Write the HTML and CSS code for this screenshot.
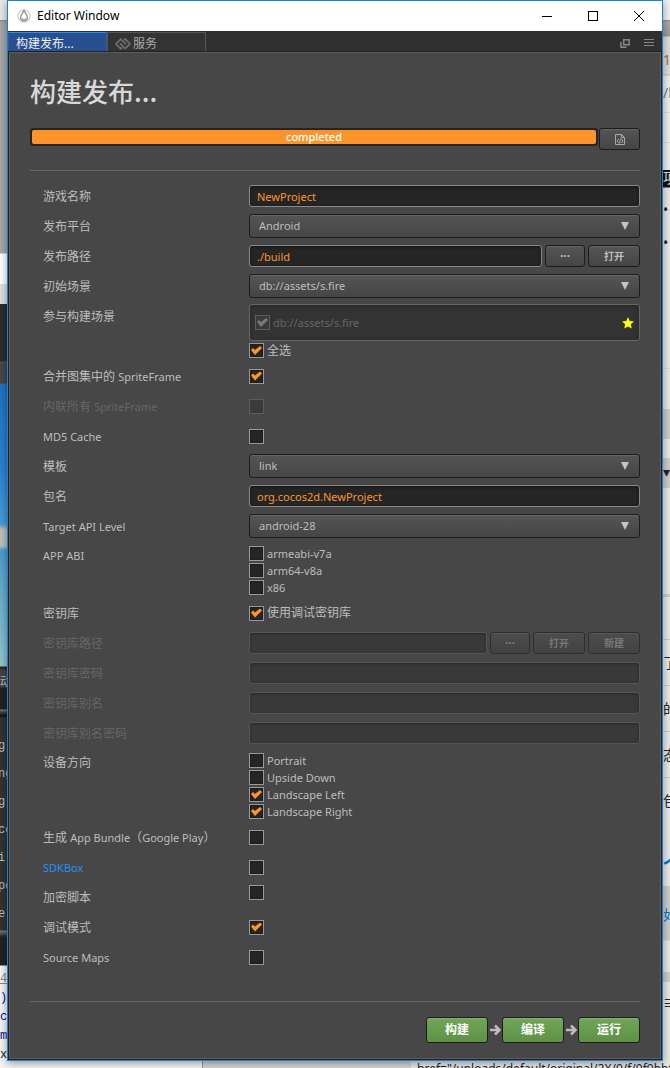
FILE: index.html
```html
<!DOCTYPE html>
<html lang="zh-CN">
<head>
    <meta charset="UTF-8">
    <meta name="viewport" content="width=device-width, initial-scale=1.0">
    <title>Editor Window</title>
    <link rel="stylesheet" href="styles.css">
</head>
<body>
<div class="desktop">
    <!-- editor behind the window -->
    <div class="behind behind-left" aria-hidden="true">
        <div class="side-tab">动</div>
        <div class="log">
            <div>g</div>
            <div>ng</div>
            <div>g</div>
            <div>co</div>
            <div>il</div>
            <div>pe</div>
            <div>e</div>
        </div>
        <div class="source">
            <div class="lineno">40</div>
            <div class="tag">)</div>
            <div class="tag">ce</div>
            <div class="tag">me</div>
            <div>xe</div>
        </div>
    </div>

    <main class="window">
        <header class="titlebar">
            <svg class="app-icon" width="14" height="14" viewBox="0 0 14 14">
                <circle cx="7" cy="7" r="6" fill="none" stroke="#d4d4d4" stroke-width="1.4"/>
                <path d="M7 1.6C6 4 3.7 5.6 3.7 8.4a3.3 3.3 0 0 0 6.6 0C10.3 5.6 8 4 7 1.6z" fill="#fff" stroke="#8b9498" stroke-width="1.4"/>
                <path d="M5.2 9.5q1.8 2 3.6 0" fill="none" stroke="#8b9498"/>
            </svg>
            <span class="caption">Editor Window</span>
            <button class="win-btn" aria-label="Minimize"><svg width="10" height="10"><path d="M0 5.5h10" stroke="#000"/></svg></button>
            <button class="win-btn" aria-label="Maximize"><svg width="10" height="10"><rect x=".5" y=".5" width="9" height="9" fill="none" stroke="#000"/></svg></button>
            <button class="win-btn" aria-label="Close"><svg width="10" height="10"><path d="M0 0l10 10M10 0L0 10" stroke="#000"/></svg></button>
        </header>

        <nav class="tabs">
            <button class="tab active">构建发布...</button>
            <button class="tab">
                <svg width="16" height="12" viewBox="0 0 16 12" fill="none" stroke="#6c6c6c" stroke-width="1.8">
                    <path d="M7.2 9.8L5.800 10.800 1 5.900 5.800 1.200 11 6.300M8.800 2L10.200 1 15 5.900 10.200 10.600 5 5.500"/>
                </svg>
                服务
            </button>
            <div class="tab-tools">
                <button aria-label="Pop out"><svg width="10" height="9" fill="none" stroke="#888" stroke-width="1.5"><path d="M3.7.8h5.500v5h-5.500zM1 3v5.200h5.500"/></svg></button>
                <button aria-label="Menu"><svg width="10" height="8" stroke="#888"><path d="M0 .5h10M0 3.500h10M0 6.500h10"/></svg></button>
            </div>
        </nav>

        <section class="panel">
            <h1>构建发布...</h1>
            <div class="progress-row">
                <div class="progress" role="progressbar" aria-valuenow="100"><div class="bar">completed</div></div>
                <button class="btn log-btn" aria-label="Log">
                    <svg width="10" height="11" viewBox="0 0 10 11" fill="none" stroke="#aaa"><path d="M.5.5h6l3 3v7h-9zM6.500.5v3h3M3.500 5L2 7l1.500 2M6.500 5L8 7 6.500 9M5.500 4.500l-1 5"/></svg>
                </button>
            </div>

            <form class="form" onsubmit="return false">
                <div class="row"><label class="name" for="name">游戏名称</label><input class="text" id="name" type="text" value="NewProject"></div>
                <div class="row"><label class="name" for="platform">发布平台</label><div class="select"><select id="platform"><option>Android</option></select></div></div>
                <div class="row">
                    <label class="name" for="path">发布路径</label>
                    <div class="group">
                        <input class="text" id="path" type="text" value="./build">
                        <button class="btn dots">···</button>
                        <button class="btn wide">打开</button>
                    </div>
                </div>
                <div class="row"><label class="name" for="scene">初始场景</label><div class="select"><select id="scene"><option>db://assets/s.fire</option></select></div></div>
                <div class="row scenes">
                    <span class="name">参与构建场景</span>
                    <div class="stack">
                        <div class="scene-list">
                            <label class="check en off"><input type="checkbox" checked disabled>db://assets/s.fire</label>
                            <svg width="12" height="12" viewBox="0 0 12 12"><path d="M6 0l1.700 3.900 4.300.5-3.200 2.900.9 4.300L6 9.500l-3.700 2.100.9-4.300L0 4.400l4.300-.5z" fill="#ff0"/></svg>
                        </div>
                        <label class="check"><input type="checkbox" checked>全选</label>
                    </div>
                </div>
                <div class="row"><label class="name" for="merge">合并图集中的 <span class="en">SpriteFrame</span></label><input id="merge" type="checkbox" checked></div>
                <div class="row off"><label class="name" for="inline">内联所有 <span class="en">SpriteFrame</span></label><input id="inline" type="checkbox" disabled></div>
                <div class="row"><label class="name en" for="md5">MD5 Cache</label><input id="md5" type="checkbox"></div>
                <div class="row"><label class="name" for="template">模板</label><div class="select"><select id="template"><option>link</option></select></div></div>
                <div class="row"><label class="name" for="package">包名</label><input class="text" id="package" type="text" value="org.cocos2d.NewProject"></div>
                <div class="row"><label class="name en" for="api">Target API Level</label><div class="select"><select id="api"><option>android-28</option></select></div></div>
                <div class="row checks">
                    <span class="name en">APP ABI</span>
                    <div class="stack">
                        <label class="check en"><input type="checkbox">armeabi-v7a</label>
                        <label class="check en"><input type="checkbox">arm64-v8a</label>
                        <label class="check en"><input type="checkbox">x86</label>
                    </div>
                </div>
                <div class="row"><span class="name">密钥库</span><label class="check"><input type="checkbox" checked>使用调试密钥库</label></div>
                <div class="row off">
                    <label class="name" for="keystore">密钥库路径</label>
                    <div class="group">
                        <input class="text" id="keystore" type="text" disabled>
                        <button class="btn dots" disabled>···</button>
                        <button class="btn wide" disabled>打开</button>
                        <button class="btn wide" disabled>新建</button>
                    </div>
                </div>
                <div class="row off"><label class="name" for="kspass">密钥库密码</label><input class="text" id="kspass" type="password" disabled></div>
                <div class="row off"><label class="name" for="alias">密钥库别名</label><input class="text" id="alias" type="text" disabled></div>
                <div class="row off"><label class="name" for="aliaspass">密钥库别名密码</label><input class="text" id="aliaspass" type="password" disabled></div>
                <div class="row checks">
                    <span class="name">设备方向</span>
                    <div class="stack">
                        <label class="check en"><input type="checkbox">Portrait</label>
                        <label class="check en"><input type="checkbox">Upside Down</label>
                        <label class="check en"><input type="checkbox" checked>Landscape Left</label>
                        <label class="check en"><input type="checkbox" checked>Landscape Right</label>
                    </div>
                </div>
                <div class="row"><label class="name" for="bundle">生成 <span class="en">App Bundle</span>（<span class="en">Google Play</span>）</label><input id="bundle" type="checkbox"></div>
                <div class="row"><a class="name en" href="#sdkbox">SDKBox</a><input id="sdkbox" type="checkbox" aria-label="SDKBox"></div>
                <div class="row encrypt"><label class="name" for="encrypt">加密脚本</label><input id="encrypt" type="checkbox"></div>
                <div class="row"><label class="name" for="debug">调试模式</label><input id="debug" type="checkbox" checked></div>
                <div class="row"><label class="name en" for="maps">Source Maps</label><input id="maps" type="checkbox"></div>
            </form>

            <footer class="actions">
                <button class="btn green">构建</button>
                <svg width="12" height="12" viewBox="0 0 12 12"><path d="M1 6h9M6 1.500L10.500 6 6 10.500" fill="none" stroke="#bdbdbd" stroke-width="2.5"/></svg>
                <button class="btn green">编译</button>
                <svg width="12" height="12" viewBox="0 0 12 12"><path d="M1 6h9M6 1.500L10.500 6 6 10.500" fill="none" stroke="#bdbdbd" stroke-width="2.5"/></svg>
                <button class="btn green">运行</button>
            </footer>
        </section>
    </main>

    <!-- browser behind the window -->
    <div class="behind behind-right" aria-hidden="true">
        <div class="url">1</div>
        <div class="path">/b</div>
        <div class="banner">项</div>
        <div class="bullets"><div>•</div><div>•</div></div>
        <div class="caret">▾</div>
        <div class="posts"><div>了</div><div>的</div><div>态</div><div>包</div></div>
        <div class="heading">个</div>
        <div class="link">如</div>
        <div class="more">≡</div>
    </div>
    <div class="behind-bottom" aria-hidden="true">href="/uploads/default/original/2X/9/f/9f9bbf8</div>
</div>
</body>
</html>
```
FILE: styles.css
```css
* {
    box-sizing: border-box;
}
body {
    margin: 0;
    font-family: "Noto Sans", "Noto Sans CJK SC", sans-serif;
    font-size: 12px;
    line-height: 16px;
    color: #bdbdbd;
}
button, input, select {
    font: inherit;
    color: inherit;
    margin: 0;
}
button {
    padding: 0;
    border: 0;
    background: none;
}
.en {
    font-size: 11px;
}
.desktop {
    display: grid;
    grid-template-columns: 7px 1fr 7px;
    grid-template-rows: 1fr 7px;
    min-height: 100vh;
    overflow: hidden;
    background: linear-gradient(90deg, #f4f4f4 202px, #999 202px, #999 203px, #d4d4d4 203px, #d4d4d4 411px, #e8e8e8 411px);
}

/* what shows round the window */
.behind {
    height: 0;
    min-height: 100%;
    overflow: hidden;
    white-space: nowrap;
}
.behind-left {
    padding-top: 675px;
    font-family: "Liberation Mono", "Noto Sans CJK SC", monospace;
    background: linear-gradient(#e8e8e8 20px, #888 20px, #a8a8a8 22px, #a8a8a8 253px, #fff 254px, #fff 284px, #e0e0e0 284px, #e0e0e0 304px, #2c2c2c 304px, #2c2c2c 361px, #555 362px, #474747 363px, #474747 383px, #2371bd 384px, #2f82d0 470px, #4b9bd9 524px, #c3beb2 530px, #b9c0bd 546px, #4d9dce 550px, #94c5cc 666px, #222 667px, #444 671px, #444 680px, #444 687px, #222 688px, #222 709px, #777 710px, #444 712px, #111 716px, #333 718px, #333 930px, #777 931px, #222 937px, #222 965px, #f4f4f4 966px);
}
.side-tab {
    height: 54px;
}
.log {
    height: 247px;
    padding-top: 3px;
    line-height: 28px;
    text-indent: -2px;
}
.source {
    line-height: 19px;
    color: #222;
}
.lineno {
    margin-top: -6px;
    color: #888;
    text-decoration: underline;
}
.tag {
    color: #118;
}
.behind-right {
    color: #222;
    font-size: 14px;
    line-height: 20px;
    background: linear-gradient(#f0f0f0 20px, #888 20px, #aaa 22px, #999 36px, #ddd 37px, #ddd 74px, #bbb 75px, #eee 76px, #eee 112px, #ccc 112px, #eee 113px, #eee 142px, #ccc 142px, #eee 143px, #eee 170px, #111 170px, #111 187px, #e8e8e8 188px, #e8e8e8 368px, #ccc 368px, #e8e8e8 369px, #e8e8e8 409px, #ccc 409px, #ccc 439px, #e8e8e8 439px, #e8e8e8 458px, #ccc 458px, #ccc 488px, #e8e8e8 488px, #e8e8e8 594px, #ccc 594px, #ccc 597px, #e8e8e8 597px, #e8e8e8 886px, #ccc 886px, #ccc 940px, #e8e8e8 941px, #e8e8e8 972px, #ccc 972px, #ccc 982px, #e8e8e8 982px);
}
.url {
    padding-top: 50px;
    color: #b5651d;
}
.path {
    padding-top: 13px;
    color: #678;
}
.banner {
    padding-top: 65px;
    color: #eee;
}
.bullets {
    padding-top: 5px;
    line-height: 33px;
}
.caret {
    padding-top: 203px;
}
.posts {
    padding-top: 157px;
    line-height: 46px;
}
.posts div {
    border-top: 1px solid #ccc;
    height: 46px;
}
.heading {
    padding-top: 32px;
    color: #07b;
    font-size: 18px;
    font-weight: bold;
}
.link {
    padding-top: 30px;
    color: #07b;
}
.more {
    padding-top: 68px;
}
.behind-bottom {
    grid-column: 1 / -1;
    height: 7px;
    padding-left: 417px;
    overflow: hidden;
    white-space: nowrap;
    color: #222;
    line-height: 16px;
}

/* window */
.window {
    display: flex;
    flex-direction: column;
    min-width: 0;
    border: 1px solid #1883d7;
    background: #222;
    box-shadow: 0 2px 8px rgba(0, 0, 0, .4);
    position: relative;
}
.titlebar {
    display: flex;
    align-items: center;
    height: 30px;
    padding-left: 9px;
    background: #fff;
    color: #000;
}
.caption {
    flex: 1;
    margin-left: 6px;
}
.win-btn {
    display: flex;
    align-items: center;
    justify-content: center;
    width: 46px;
    height: 30px;
}
.tabs {
    display: flex;
    height: 21px;
    padding: 1px 1px 0 0;
    background: #303030;
    border-bottom: 1px solid #222;
}
.tab {
    display: flex;
    align-items: center;
    gap: 2px;
    width: 99px;
    padding: 4px 7px 0;
    border: 1px solid #555;
    border-bottom: 0;
    background: #333;
    color: #aaa;
}
.tab.active {
    border-color: #2b5ea8;
    border-top-color: #2491f5;
    background: #284f8f;
    color: #eee;
}
.tab-tools {
    display: flex;
    flex: 1;
    align-items: center;
    justify-content: flex-end;
    gap: 14px;
    padding: 3px 7px 0 0;
}
.tab-tools button {
    display: flex;
}
.panel {
    flex: 1;
    margin: 0 1px 1px;
    padding: 22px 20px 15px 20px;
    border: 1px solid #5c5c5c;
    background: #474747;
}
h1 {
    margin: 0;
    height: 53px;
    line-height: 32px;
    font-size: 26px;
    font-weight: 500;
    font-family: "Noto Sans CJK SC", sans-serif;
    color: #d8d8d8;
}
.progress-row {
    display: flex;
    align-items: flex-start;
    gap: 1px;
    height: 43px;
    border-bottom: 1px solid #666;
}
.progress {
    flex: 1;
    padding: 2px;
    border-radius: 3px;
    background: #242424;
}
.bar {
    height: 14px;
    line-height: 14px;
    border-radius: 2px;
    background: #fd942b;
    color: #fff;
    font-size: 11px;
    font-weight: 500;
    text-align: center;
}

/* controls */
.btn {
    display: flex;
    flex: none;
    align-items: center;
    justify-content: center;
    height: 22px;
    border: 1px solid #1c1c1c;
    border-radius: 3px;
    background: linear-gradient(#555, #454545);
    box-shadow: inset 0 1px #646464;
    font-weight: bold;
}
.log-btn {
    width: 41px;
}
.dots {
    width: 40px;
}
.wide {
    width: 52px;
    font-size: 10px;
}
.btn:disabled {
    border-color: #2e2e2e;
    background: linear-gradient(#4c4c4c, #424242);
    box-shadow: inset 0 1px #555;
    color: #777;
}
.text {
    flex: 1;
    width: 100%;
    min-width: 0;
    height: 22px;
    padding: 0 7px;
    border: 1px solid #888;
    border-radius: 3px;
    background: #252525;
    box-shadow: inset 0 1px 3px #151515;
    color: #fd942b;
    font-size: 11px;
}
.text:disabled {
    border-color: #555;
    background: #393939;
    box-shadow: inset 0 1px 3px #292929;
}
.select {
    position: relative;
}
.select select {
    display: block;
    width: 100%;
    height: 24px;
    padding: 0 9px;
    appearance: none;
    border: 1px solid #1c1c1c;
    border-radius: 3px;
    background: linear-gradient(#555, #454545);
    box-shadow: inset 0 1px #666;
    font-size: 11px;
}
.select::after {
    content: "";
    position: absolute;
    right: 11px;
    top: 8px;
    border: 4px solid transparent;
    border-top: 8px solid #c4c4c4;
    border-bottom: 0;
    pointer-events: none;
}
input[type="checkbox"] {
    appearance: none;
    flex: none;
    width: 15px;
    height: 15px;
    border: 1px solid #999;
    background: #252525;
    box-shadow: inset 0 0 2px #111;
}
input[type="checkbox"]:checked::before {
    content: "";
    display: block;
    height: 13px;
    background: #fd942b;
    clip-path: polygon(1px 6px, 3px 4px, 5px 6px, 10px 2px, 12px 4px, 5px 11px);
}
input[type="checkbox"]:disabled {
    border-color: #5c5c5c;
    background: #3a3a3a;
    box-shadow: none;
}
input[type="checkbox"]:disabled::before {
    background: #777;
}
.check {
    display: flex;
    align-items: center;
    gap: 3px;
    height: 15px;
}
.check.off {
    color: #666;
}

/* form */
.form {
    padding: 10px 0 29px 13px;
    border-bottom: 1px solid #666;
}
.row {
    display: grid;
    grid-template-columns: 206px 1fr;
    align-items: center;
    height: 30px;
}
.row.off {
    color: #666;
}
.row a {
    color: #2491f5;
    text-decoration: none;
}
.name {
    padding-top: 2px;
}
.group {
    display: flex;
    gap: 3px;
}
.stack {
    display: flex;
    flex-direction: column;
    gap: 2px;
}
.row.scenes, .row.checks {
    align-items: start;
    height: auto;
}
.row.scenes {
    padding: 3px 0;
}
.row.checks {
    padding: 5px 0 3px;
}
.scenes .name {
    padding-top: 5px;
}
.scene-list {
    display: flex;
    align-items: center;
    justify-content: space-between;
    height: 37px;
    padding: 0 5px;
    border: 1px solid #666;
    border-radius: 3px;
    background: #333;
    box-shadow: inset 0 1px 4px #252525;
}
.encrypt input {
    align-self: start;
    margin-top: 3px;
}
.actions {
    display: flex;
    align-items: center;
    justify-content: flex-end;
    gap: 1px;
    padding-top: 15px;
}
.green {
    width: 62px;
    height: 26px;
    background: linear-gradient(#71a658, #5e9147);
    box-shadow: inset 0 1px #83b36c;
    color: #fff;
}
```
